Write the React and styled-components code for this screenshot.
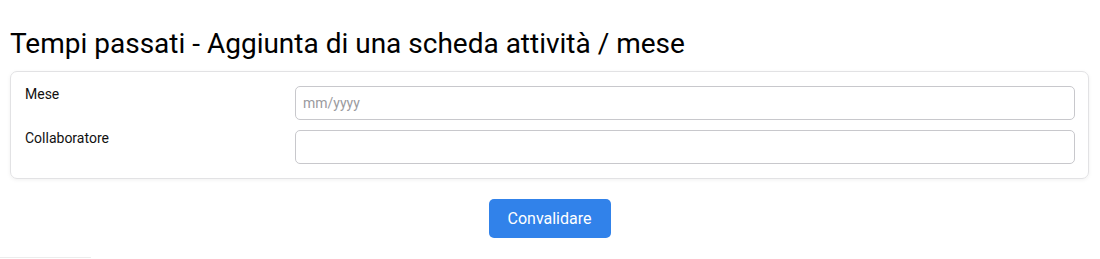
import React from "react";
import styled, { createGlobalStyle } from "styled-components";

const GlobalStyle = createGlobalStyle`
	html, body {
		margin: 0;
		padding: 0;
		background: #ffffff;
		font-family: Roboto, "Liberation Sans", sans-serif;
		color: #111;
	}
`;

const Page = styled.div`
	padding: 0 11px 0 10px;
	display: flex;
	flex-direction: column;
`;

const Title = styled.h1`
	margin: 26px 0 0 0;
	font-size: 28px;
	font-weight: 400;
	line-height: 36px;
	color: #000;
	height: 45px;
`;

const Card = styled.div`
	border: 1px solid #e2e2e4;
	border-radius: 7px;
	box-shadow: 0 1px 4px rgba(0, 0, 0, 0.06);
	padding: 14px 13px 14px 14px;
	display: flex;
	flex-direction: column;
	gap: 10px;
`;

const Row = styled.div`
	display: grid;
	grid-template-columns: 270px 1fr;
	align-items: start;
`;

const Label = styled.label`
	font-size: 14px;
	line-height: 16px;
	padding-top: 0;
	color: #111;
`;

const Input = styled.input`
	box-sizing: border-box;
	height: 34px;
	width: 100%;
	border: 1px solid #c8c8cc;
	border-radius: 5px;
	padding: 0 7px;
	font-family: Roboto, "Liberation Sans", sans-serif;
	font-size: 14px;
	color: #222;
	background: #fff;

	&::placeholder {
		color: #9a9a9e;
	}
`;

const Actions = styled.div`
	display: flex;
	justify-content: center;
	padding-top: 20px;
`;

const Button = styled.button`
	width: 122px;
	height: 39px;
	border: none;
	border-radius: 5px;
	background-color: #3182ea;
	color: #fff;
	font-family: Roboto, "Liberation Sans", sans-serif;
	font-size: 16px;
	cursor: pointer;
`;

const Divider = styled.div`
	width: 91px;
	height: 1px;
	margin: 19px 0 0 -10px;
	background: #ececec;
`;

const App = () => {
	return (
		<>
			<GlobalStyle />
			<Page>
				<Title>Tempi passati - Aggiunta di una scheda attività / mese</Title>
				<Card>
					<Row>
						<Label>Mese</Label>
						<Input placeholder="mm/yyyy" />
					</Row>
					<Row>
						<Label>Collaboratore</Label>
						<Input />
					</Row>
				</Card>
				<Actions>
					<Button>Convalidare</Button>
				</Actions>
				<Divider />
			</Page>
		</>
	);
};

export default App;
